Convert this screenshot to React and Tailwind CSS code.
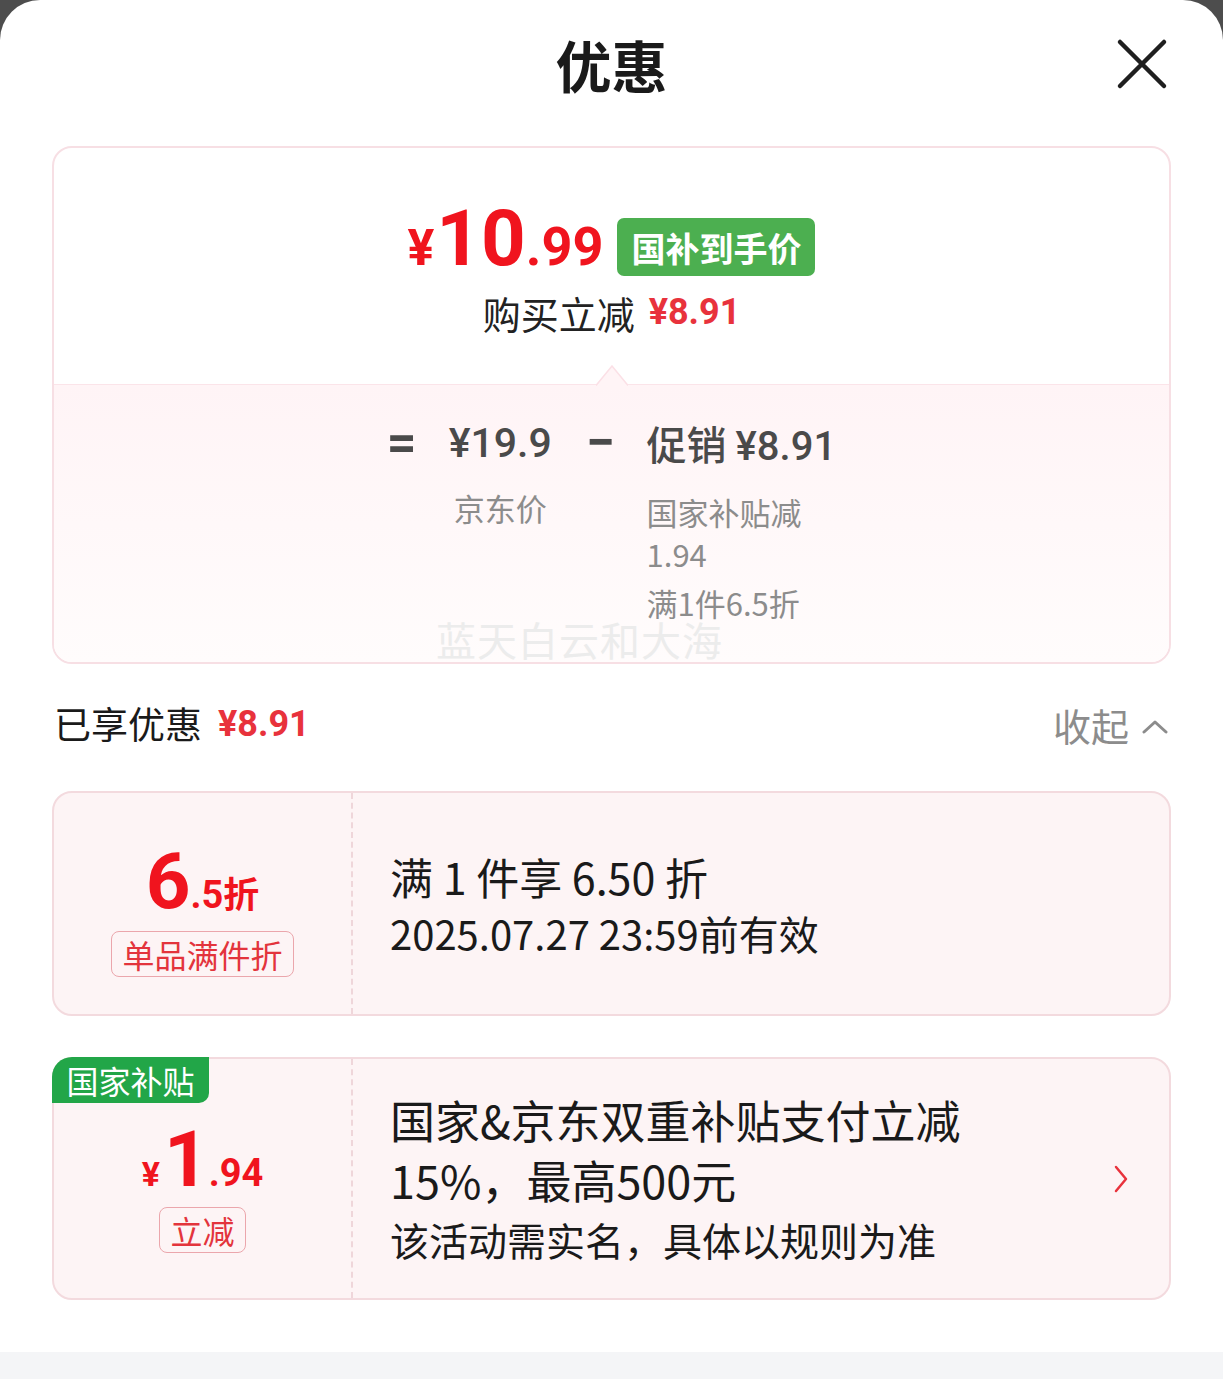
import React from 'react';

const CN = "font-['Noto_Sans_CJK_SC','Noto_Sans',sans-serif]";
const NUM = "font-['Roboto','Noto_Sans_CJK_SC',sans-serif]";

const CloseIcon = () => (
  <svg width="52" height="52" viewBox="0 0 52 52" fill="none">
    <path d="M4 4L48 48M48 4L4 48" stroke="#1f1f1f" strokeWidth="4.5" strokeLinecap="round" />
  </svg>
);

const ChevronUp = () => (
  <svg width="28" height="16" viewBox="0 0 28 16" fill="none">
    <path d="M3 14L14 4L25 14" stroke="#8c8c8c" strokeWidth="3" strokeLinecap="round" strokeLinejoin="round" />
  </svg>
);

const ChevronRight = () => (
  <svg width="16" height="30" viewBox="0 0 16 30" fill="none">
    <path d="M3 3L13 15L3 27" stroke="#e8323c" strokeWidth="2.5" strokeLinecap="round" strokeLinejoin="round" />
  </svg>
);

const App = () => {
  return (
    <div className={`w-[1223px] h-[1379px] bg-[#4d4d4d] overflow-hidden ${CN}`}>
      <div className="h-full bg-white rounded-t-[40px] flex flex-col">
        {/* Header */}
        <div className="h-[128px] relative flex items-center justify-center shrink-0">
          <h1 className="text-[56px] font-bold text-[#1a1a1a] leading-none">优惠</h1>
          <button className="absolute right-[55px] top-[38px]">
            <CloseIcon />
          </button>
        </div>

        {/* Price breakdown card */}
        <div className="mt-[18px] mx-[52px] border-2 border-[#f7dfe4] rounded-[20px] overflow-hidden shrink-0">
          <div className="h-[236px] flex flex-col items-center pt-[62px]">
            <div className="flex items-end h-[68px]">
              <div className={`flex items-baseline text-[#f0141e] font-bold leading-none ${NUM}`}>
                <span className="text-[50px]">¥</span>
                <span className="text-[78px] ml-[2px]">10</span>
                <span className="text-[54px]">.99</span>
              </div>
              <div className="ml-[14px] mb-[2px] h-[58px] px-[14px] bg-[#4caf50] rounded-[7px] flex items-center text-white text-[34px] font-bold">
                国补到手价
              </div>
            </div>
            <div className="mt-[10px] flex items-center h-[48px]">
              <span className="text-[38px] text-[#222]">购买立减</span>
              <span className={`ml-[14px] text-[36px] font-bold text-[#e8323c] ${NUM}`}>¥8.91</span>
            </div>
          </div>

          <div className="relative h-[278px] border-t border-[#fbe4e9] bg-gradient-to-b from-[#fff4f6] to-[#fffcfc]">
            {/* notch */}
            <svg className="absolute left-1/2 -translate-x-1/2 -top-[20px]" width="32" height="21" viewBox="0 0 32 21" fill="none">
              <path d="M0 20.5L16 1L32 20.5" fill="#fff4f6" stroke="#fbe0e6" strokeWidth="1.5" />
            </svg>

            <div className="flex justify-center pt-[32px] text-[#4a4a4a]">
              <div className={`text-[52px] font-bold leading-[52px] ${NUM}`}>=</div>
              <div className="ml-[32px] flex flex-col items-center">
                <span className={`text-[41px] font-medium leading-[52px] ${NUM}`}>¥19.9</span>
                <span className="mt-[18px] text-[31px] text-[#8c8c8c] leading-[42px]">京东价</span>
              </div>
              <div className={`ml-[34px] text-[52px] font-bold leading-[52px] ${NUM}`}>−</div>
              <div className="ml-[32px] flex flex-col items-start">
                <span className="text-[40px] font-medium leading-[52px]">
                  促销 <span className={NUM}>¥8.91</span>
                </span>
                <span className="mt-[18px] text-[31px] text-[#8c8c8c] leading-[42px]">国家补贴减</span>
                <span className="text-[31px] text-[#8c8c8c] leading-[42px]">1.94</span>
                <span className="mt-[10px] text-[31px] text-[#8c8c8c] leading-[36px]">满1件6.5折</span>
              </div>
            </div>

            {/* watermark */}
            <div className="absolute left-[382px] top-[236px] text-[40px] leading-[36px] text-[#ececec] tracking-[1px]">
              蓝天白云和大海
            </div>
          </div>
        </div>

        {/* Summary row */}
        <div className="h-[127px] pb-[7px] mx-[54px] flex items-center justify-between shrink-0">
          <div className="flex items-center">
            <span className="text-[37px] text-[#1a1a1a]">已享优惠</span>
            <span className={`ml-[16px] text-[36px] font-bold text-[#e8323c] ${NUM}`}>¥8.91</span>
          </div>
          <div className="flex items-center">
            <span className="text-[38px] text-[#8c8c8c]">收起</span>
            <span className="ml-[12px] mt-[4px]">
              <ChevronUp />
            </span>
          </div>
        </div>

        {/* Coupon 1 */}
        <div className="mx-[52px] h-[225px] shrink-0 flex bg-[#fdf4f5] border-2 border-[#f3dade] rounded-[20px]">
          <div className="w-[297px] flex flex-col items-center pt-[50px]">
            <div className={`flex items-baseline text-[#f0141e] font-bold leading-none ${NUM}`}>
              <span className="text-[78px]">6</span>
              <span className="text-[38px]">.5</span>
              <span className={`text-[36px] ${CN}`}>折</span>
            </div>
            <div className="mt-[10px] h-[46px] px-[10px] border border-[#eba6ac] rounded-[8px] flex items-center text-[32px] text-[#e3343c]">
              单品满件折
            </div>
          </div>
          <div className="flex-1 border-l-2 border-dashed border-[#efd6da] flex flex-col justify-center pl-[37px]">
            <div className="text-[43px] text-[#1a1a1a] leading-[58px]">满 1 件享 6.50 折</div>
            <div className="text-[40px] text-[#1a1a1a] leading-[56px]">2025.07.27 23:59前有效</div>
          </div>
        </div>

        {/* Coupon 2 */}
        <div className="relative mt-[41px] mx-[52px] h-[243px] shrink-0 flex bg-[#fdf4f5] border-2 border-[#f3dade] rounded-[20px]">
          <div className="absolute -left-[2px] -top-[2px] w-[157px] h-[46px] bg-[#22a648] rounded-tl-[20px] rounded-br-[10px] flex items-center justify-center text-[32px] text-white">
            国家补贴
          </div>
          <div className="w-[297px] flex flex-col items-center pt-[62px]">
            <div className={`flex items-baseline text-[#f0141e] font-bold leading-none ${NUM}`}>
              <span className="text-[34px]">¥</span>
              <span className="text-[78px] ml-[4px]">1</span>
              <span className="text-[38px]">.94</span>
            </div>
            <div className="mt-[8px] h-[46px] px-[10px] border border-[#eba6ac] rounded-[8px] flex items-center text-[32px] text-[#e3343c]">
              立减
            </div>
          </div>
          <div className="flex-1 border-l-2 border-dashed border-[#efd6da] flex items-center pl-[37px] pr-[40px]">
            <div className="flex-1 flex flex-col">
              <div className="text-[45px] text-[#1a1a1a] leading-[60px] w-[620px]">
                国家&amp;京东双重补贴支付立减
                <br />
                15%，最高500元
              </div>
              <div className="text-[39px] text-[#1a1a1a] leading-[58px]">该活动需实名，具体以规则为准</div>
            </div>
            <ChevronRight />
          </div>
        </div>

        <div className="flex-1" />
        <div className="h-[27px] bg-[#f4f5f7] shrink-0" />
      </div>
    </div>
  );
};

export default App;
